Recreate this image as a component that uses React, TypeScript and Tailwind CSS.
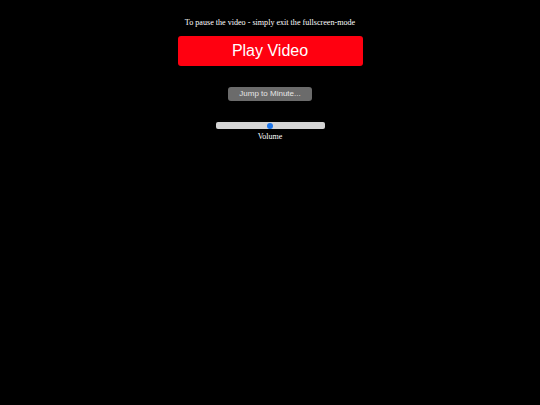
export default function App() {
  return (
    <div className="flex min-h-[405px] w-full flex-col items-center bg-black pt-[18px]">
      <p className="text-[8.1px] leading-[10px] text-white [font-family:'Liberation_Serif',serif]">
        To pause the video - simply exit the fullscreen-mode
      </p>
      <button className="mt-[8px] flex h-[29.5px] w-[185px] items-center justify-center rounded-[3px] bg-[#ff0010] text-[16px] leading-none text-white [font-family:'Liberation_Sans',sans-serif]">
        Play Video
      </button>
      <button className="mt-[21px] flex h-[14.5px] w-[84px] items-center justify-center rounded-[3px] bg-[#6b6b6b] text-[8px] leading-none text-[#e6e6e6] [font-family:'Liberation_Sans',sans-serif]">
        Jump to Minute...
      </button>
      <div className="mt-[21px] flex h-[7px] w-[109px] items-center justify-center rounded-[2px] bg-[#d4d4d4]">
        <span className="size-[6px] rounded-full bg-[#1a73e8]" />
      </div>
      <span className="mt-[3px] text-[8px] leading-[10px] text-white [font-family:'Liberation_Serif',serif]">
        Volume
      </span>
    </div>
  );
}
